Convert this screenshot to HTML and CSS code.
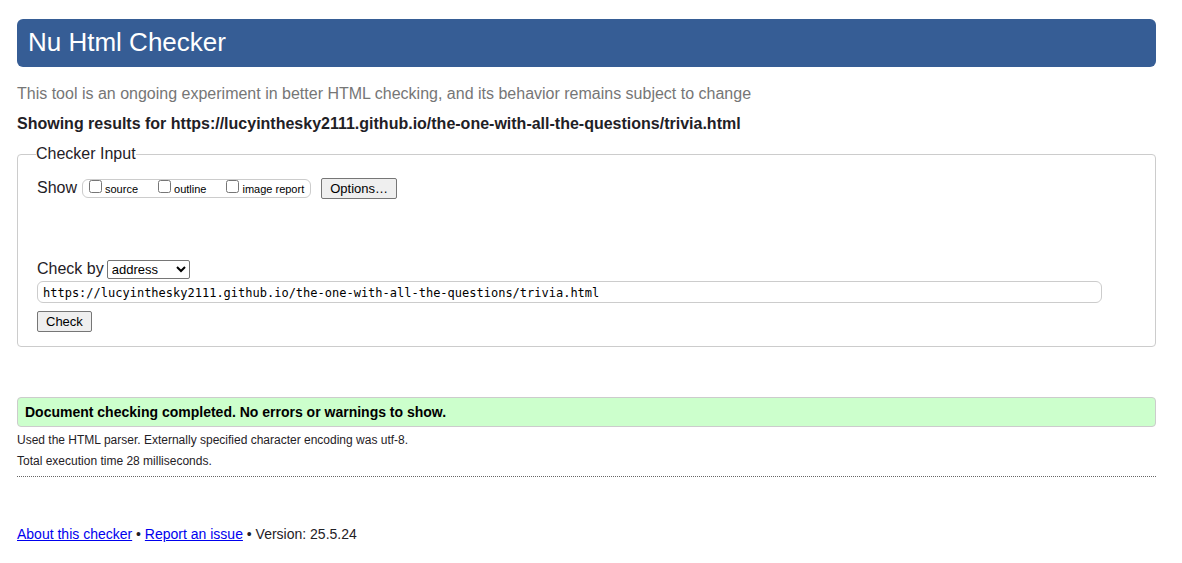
FILE: index.html
```html
<!DOCTYPE html>
<html lang="en">
<head>
<meta charset="utf-8">
<title>Nu Html Checker</title>
<link rel="stylesheet" href="styles.css">
</head>
<body>
<header class="banner"><h1 class="title">Nu Html Checker</h1></header>
<main>
<p class="intro">This tool is an ongoing experiment in better HTML checking, and its behavior remains subject to change</p>
<h2 class="subject">Showing results for https://lucyinthesky2111.github.io/the-one-with-all-the-questions/trivia.html</h2>
<form>
<fieldset class="panel">
<legend class="panel-title">Checker Input</legend>
<div class="show-row">
<span class="show-label">Show</span>
<div class="toggles">
<label class="toggle"><input type="checkbox" class="check">source</label>
<label class="toggle"><input type="checkbox" class="check">outline</label>
<label class="toggle"><input type="checkbox" class="check">image report</label>
</div>
<button type="button" class="button options">Options…</button>
</div>
<div class="method-row">
<label for="method">Check by</label>
<select id="method" class="method"><option>address</option><option>file upload</option><option>text input</option></select>
</div>
<input class="address" type="url" aria-label="Address" value="https://lucyinthesky2111.github.io/the-one-with-all-the-questions/trivia.html">
<button type="button" class="button">Check</button>
</fieldset>
</form>
<p class="success">Document checking completed. No errors or warnings to show.</p>
<div class="details">
<p class="detail">Used the HTML parser. Externally specified character encoding was utf-8.</p>
<p class="detail">Total execution time 28 milliseconds.</p>
</div>
</main>
<footer class="footer"><a href="#about">About this checker</a> • <a href="#issue">Report an issue</a> • Version: 25.5.24</footer>
</body>
</html>
```
FILE: styles.css
```css
* { box-sizing: border-box; }
body {
  margin: 0;
  padding: 19px 26px 20px 17px;
  font: 16px/20px "Liberation Sans", Arial, sans-serif;
  color: #1f2126;
  background: #fff;
}
p, h1, h2 { margin: 0; }
.banner {
  padding: 8px 11px 10px;
  border-radius: 6px;
  background: #365d95;
  color: #fff;
}
.title { font-size: 26px; line-height: 30px; font-weight: 400; }
.intro { margin-top: 17px; color: #767676; }
.subject { margin: 10px 0; font-size: 16px; line-height: 20px; }
.panel {
  margin: 0;
  padding: 14px 19px 14px;
  border: 1px solid #ccc;
  border-radius: 4px;
}
.panel-title { padding: 0; margin-left: -1px; }
.show-row { display: flex; align-items: center; }
.show-label { width: 45px; align-self: flex-start; }
.toggles {
  display: flex;
  gap: 20px;
  height: 19px;
  padding: 0 6px;
  border: 1px solid #ccc;
  border-radius: 6px;
  align-items: center;
  color: #000;
}
.toggle { display: flex; gap: 3px; align-items: center; font-size: 11px; line-height: 16px; }
.check { width: 13px; height: 13px; margin: 0 0 4px; }
.button {
  height: 21px;
  padding: 1px 8px;
  border: 1px solid #767676;
  border-radius: 2px;
  background: #efefef;
  color: #000;
  font: 13px/17px "Liberation Sans", Arial, sans-serif;
}
.options { margin-left: 10px; }
.method-row { display: flex; gap: 3px; align-items: center; margin-top: 60px; }
.method {
  width: 83px;
  height: 19px;
  border: 1px solid #767676;
  border-radius: 2px;
  background: #fff;
  color: #000;
  font: 13px "Liberation Sans", Arial, sans-serif;
}
.address {
  display: block;
  width: calc(100% - 34px);
  height: 22px;
  margin: 2px 0 8px;
  padding: 2px 5px 1px;
  border: 1px solid #ccc;
  border-radius: 6px;
  font: 12px "DejaVu Sans Mono", monospace;
  color: #000;
}
.success {
  margin-top: 50px;
  padding: 4px 7px;
  border: 1px solid #ccc;
  border-radius: 4px;
  background: #cfc;
  color: #000;
  font-size: 14px;
  font-weight: 700;
}
.details { padding: 3px 0 4px; border-bottom: 1px dotted #666; }
.detail { font-size: 12px; line-height: 21px; }
.footer { margin-top: 47px; font-size: 14px; }
.footer a { color: #00e; }
```
